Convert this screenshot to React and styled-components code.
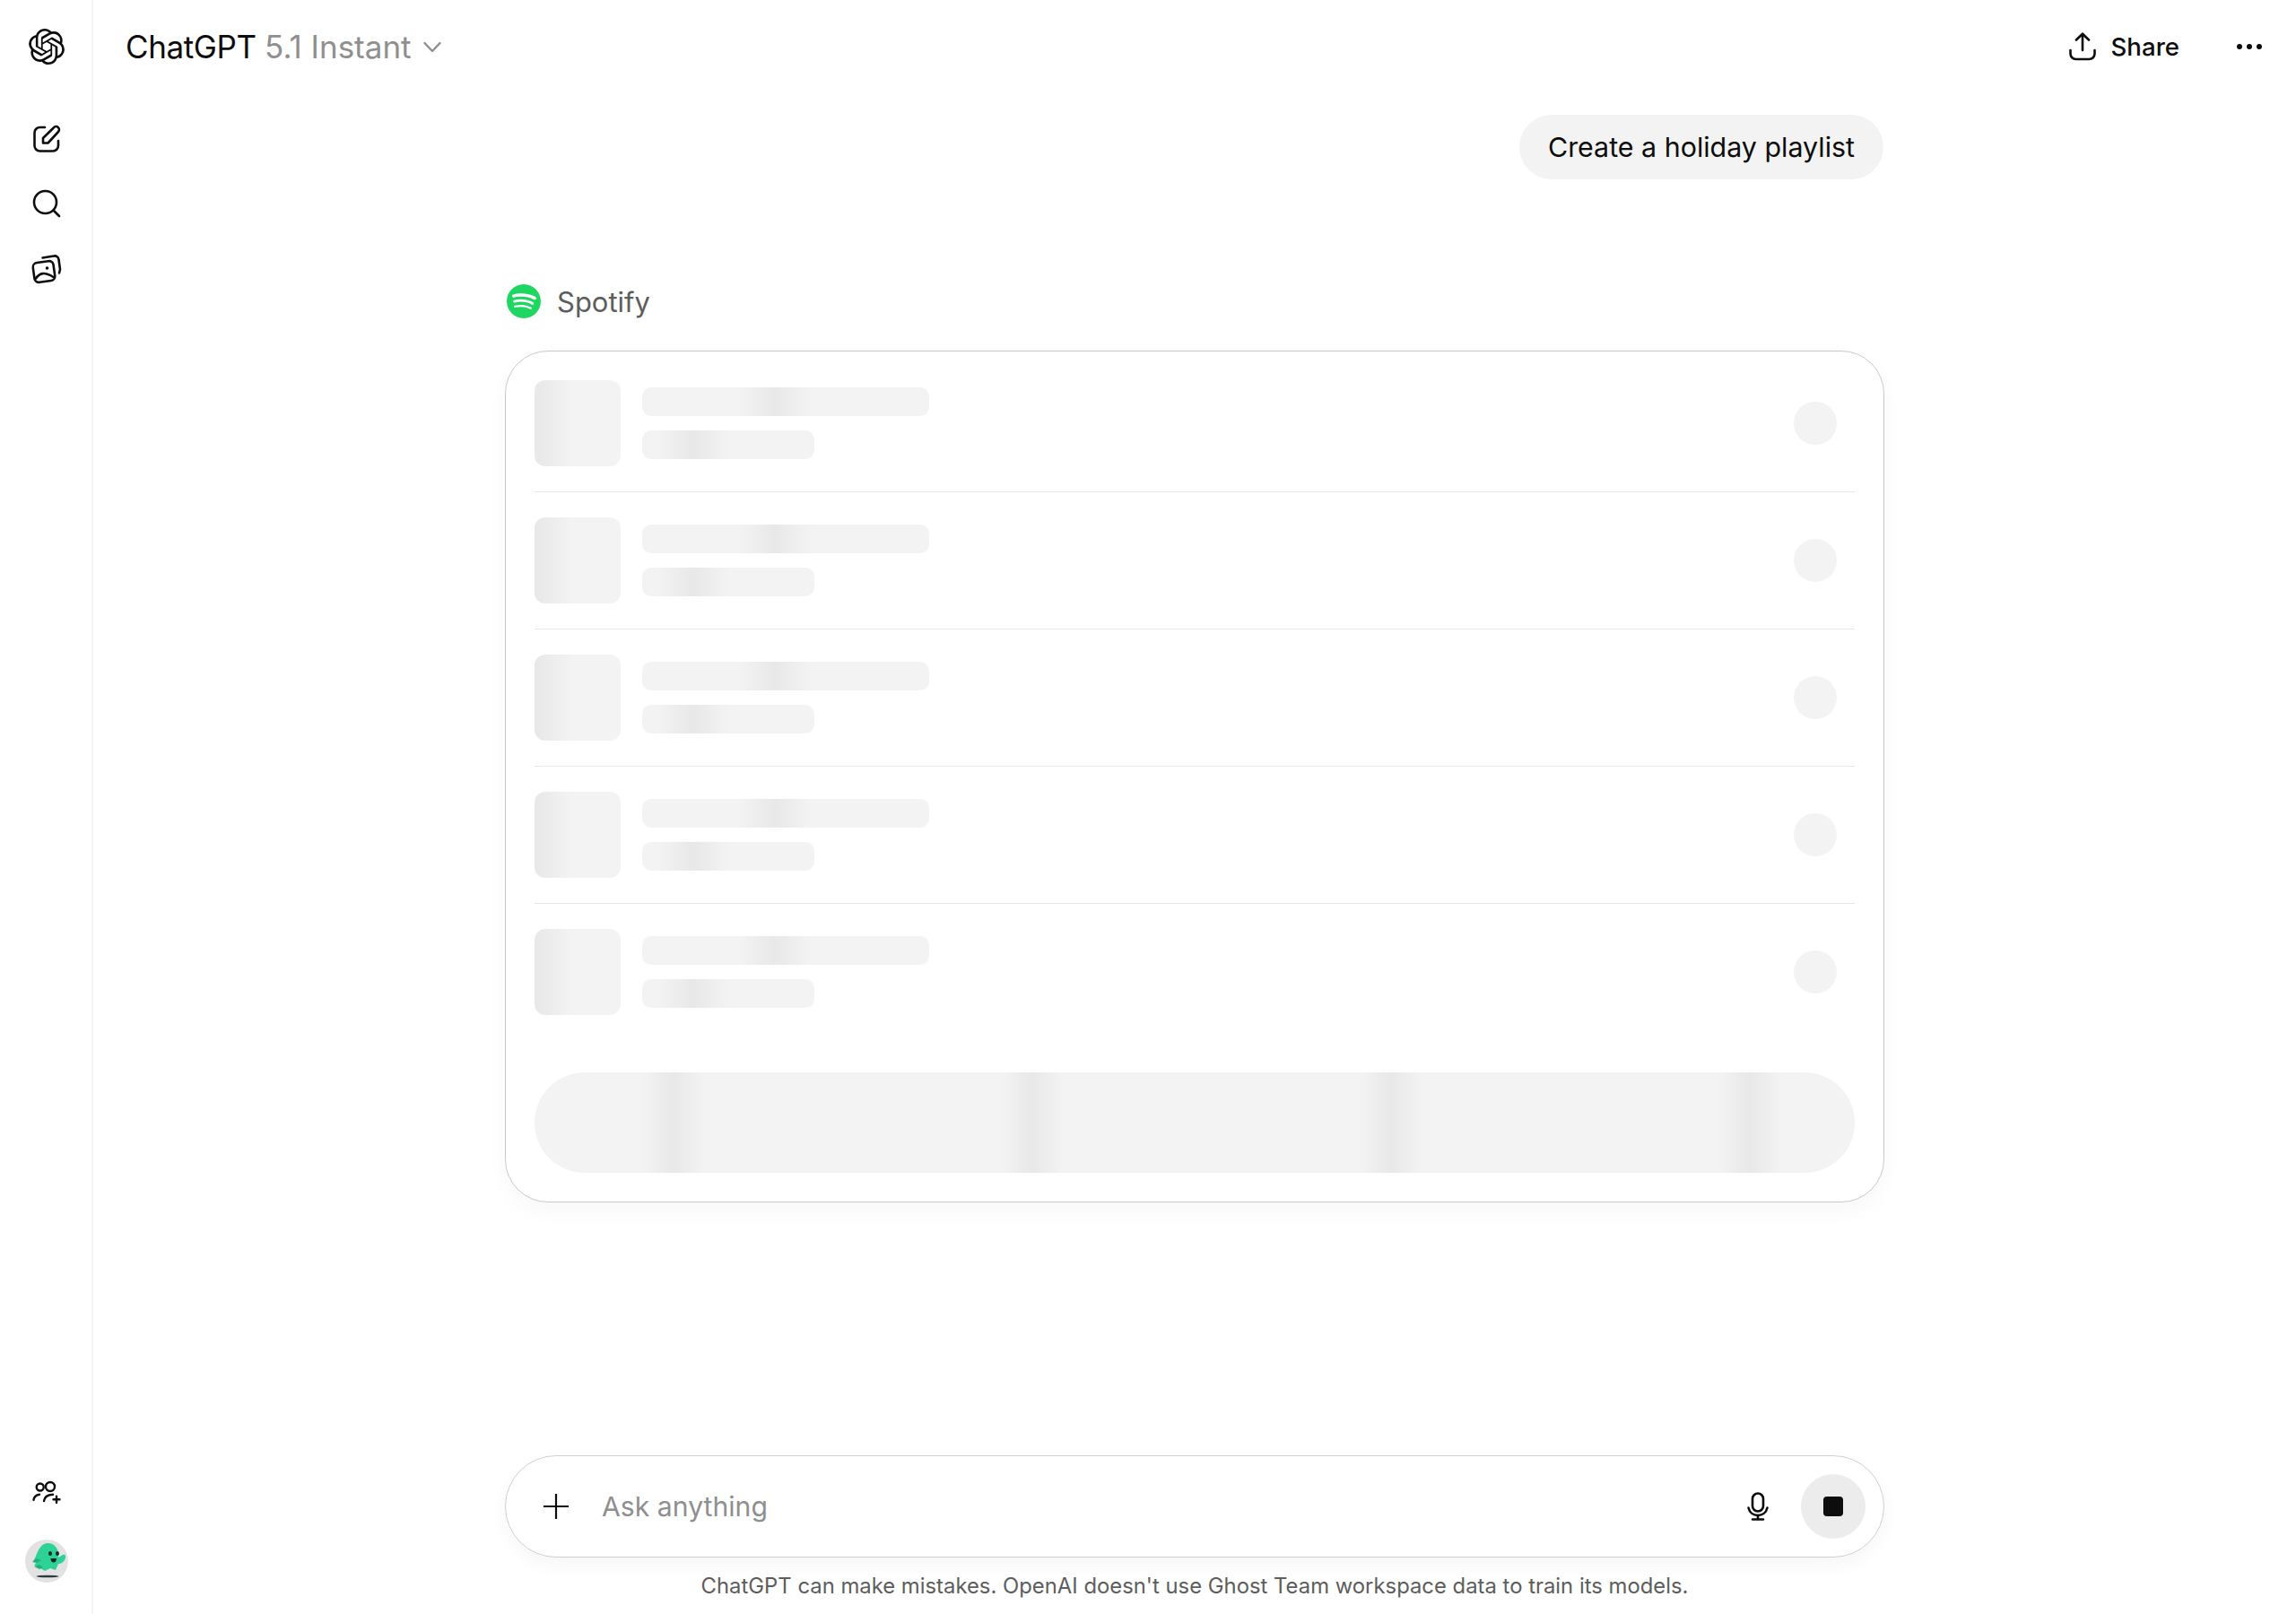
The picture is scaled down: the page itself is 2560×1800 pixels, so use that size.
import React from 'react';
import styled, { createGlobalStyle, css } from 'styled-components';
import { SiOpenai, SiSpotify } from 'react-icons/si';

const INK = '#0d0d0d';
const BASE = '#f3f3f3';
const PEAK = '#e8e8e8';

const GlobalStyle = createGlobalStyle`
  html, body {
    margin: 0;
    padding: 0;
    background: #fff;
    color: ${INK};
    font-family: Inter, "Liberation Sans", sans-serif;
  }
  * { box-sizing: border-box; }
`;

// the loading shimmer caught mid-sweep: a soft band at $peak px from the left
const shimmer = css`
  background: linear-gradient(
    90deg,
    ${BASE} ${p => p.$peak - 40}px,
    ${PEAK} ${p => p.$peak}px,
    ${BASE} ${p => p.$peak + 40}px
  );
`;

const Page = styled.div`
  display: flex;
  width: 2560px;
  height: 1800px;
  overflow: hidden;
`;

const Sidebar = styled.aside`
  display: flex;
  flex-direction: column;
  align-items: center;
  flex: 0 0 104px;
  height: 100%;
  padding: 32px 0 35px 2px;
  border-right: 2px solid #f3f3f3;
`;

const Logo = styled.div`
  display: flex;
  height: 40px;
  margin-bottom: 47px;
`;

const RailButton = styled.div`
  display: flex;
  align-items: center;
  justify-content: center;
  width: 72px;
  height: 72px;
`;

const RailFoot = styled.div`
  display: flex;
  flex-direction: column;
  align-items: center;
  gap: 39px;
  margin-top: auto;
`;

const Main = styled.main`
  display: flex;
  flex-direction: column;
  align-items: center;
  flex: 1;
  min-width: 0;
`;

const Header = styled.header`
  display: flex;
  align-items: center;
  justify-content: space-between;
  flex: 0 0 104px;
  align-self: stretch;
  padding: 0 38px 0 36px;
`;

const ModelPicker = styled.div`
  display: flex;
  align-items: center;
  gap: 13px;
  font-size: 35px;
  letter-spacing: -0.4px;
`;

const ModelName = styled.span`
  color: #8f8f8f;
  letter-spacing: 0;
`;

const HeaderActions = styled.div`
  display: flex;
  align-items: center;
  gap: 64px;
`;

const ShareButton = styled.div`
  display: flex;
  align-items: center;
  gap: 17px;
  font-size: 27.6px;
  font-weight: 500;
`;

const Dots = styled.div`
  display: flex;
  gap: 5px;
`;

const Dot = styled.span`
  width: 6px;
  height: 6px;
  border-radius: 50%;
  background: ${INK};
`;

const Thread = styled.div`
  display: flex;
  flex-direction: column;
  width: 1538px;
  padding-top: 24px;
`;

const UserBubble = styled.div`
  align-self: flex-end;
  height: 72px;
  margin-right: 1px;
  padding: 0 32px;
  border-radius: 36px;
  background: #f3f3f3;
  font-size: 30.4px;
  line-height: 72px;
`;

const AppLabel = styled.div`
  display: flex;
  align-items: center;
  gap: 18px;
  height: 38px;
  margin: 117px 0 36px;
  padding-left: 2px;
  color: #5d5d5d;
  font-size: 31px;
`;

const Card = styled.section`
  display: flex;
  flex-direction: column;
  height: 950px;
  padding: 32px;
  border: 1px solid #c8c8c8;
  border-radius: 48px;
  box-shadow: 0 10px 24px rgba(0, 0, 0, 0.03);
`;

const Row = styled.div`
  display: flex;
  align-items: center;
  padding: 28px 0;
  border-bottom: 1px solid #e6e6e6;

  &:first-child { padding-top: 0; }
  &:last-child { padding-bottom: 0; border-bottom: 0; }
`;

const Thumb = styled.div`
  ${shimmer}
  flex: 0 0 96px;
  height: 96px;
  border-radius: 12px;
`;

const RowText = styled.div`
  display: flex;
  flex-direction: column;
  gap: 16px;
  flex: 1;
  margin-left: 24px;
`;

const Bar = styled.div`
  ${shimmer}
  width: ${p => p.$width}px;
  height: 32px;
  border-radius: 10px;
`;

const RoundPlaceholder = styled.div`
  flex: 0 0 48px;
  height: 48px;
  margin-right: 20px;
  border-radius: 50%;
  background: ${BASE};
`;

const BigButton = styled.div`
  height: 112px;
  margin-top: 64px;
  border-radius: 56px;
  background: repeating-linear-gradient(
    90deg,
    ${BASE} 0,
    ${BASE} 120px,
    ${PEAK} 155px,
    ${BASE} 190px,
    ${BASE} 400px
  );
`;

const Composer = styled.div`
  display: flex;
  align-items: center;
  flex: 0 0 114px;
  width: 1538px;
  margin-top: auto;
  padding: 0 20px 0 42px;
  border: 1px solid #cfcfcf;
  border-radius: 57px;
  box-shadow: 0 8px 20px rgba(0, 0, 0, 0.04);
`;

const Placeholder = styled.span`
  flex: 1;
  margin-left: 37px;
  color: #8f8f8f;
  font-size: 30.2px;
`;

const StopButton = styled.div`
  display: flex;
  align-items: center;
  justify-content: center;
  width: 72px;
  height: 72px;
  margin-left: 36px;
  border-radius: 50%;
  background: #ececec;
`;

const StopSquare = styled.span`
  width: 22px;
  height: 22px;
  border-radius: 4px;
  background: ${INK};
`;

const Disclaimer = styled.div`
  display: flex;
  align-items: center;
  justify-content: center;
  flex: 0 0 63px;
  color: #5d5d5d;
  font-size: 23.85px;
`;

const Line = props => (
  <svg fill="none" stroke={INK} strokeWidth="2.6" strokeLinecap="round" strokeLinejoin="round" {...props} />
);

const EditIcon = () => (
  <Line width="32" height="32" viewBox="0 0 32 32">
    <path d="M14 3H8.500A6 6 0 0 0 2.500 9v14.500a6 6 0 0 0 6 6H23a6 6 0 0 0 6-6V18" />
    <path d="M12 20.500v-5.500L24 3.200a3.400 3.400 0 0 1 5 4.800L17.500 20.500z" />
  </Line>
);

const SearchIcon = () => (
  <Line width="32" height="32" viewBox="0 0 32 32">
    <circle cx="14.500" cy="14.500" r="12.500" />
    <path d="M24 24l6 6" />
  </Line>
);

const LibraryIcon = () => (
  <Line width="36" height="36" viewBox="0 0 36 36">
    <rect x="3.500" y="11" width="23" height="22" rx="5" transform="rotate(-8 15 22)" />
    <path d="M13.500 6.500L26 4.500a4.500 4.500 0 0 1 5.500 4l1.500 11-1 4" />
    <path d="M5.500 30c5-7 10-8 20-2" />
    <circle cx="18.500" cy="18" r="1.800" fill={INK} stroke="none" />
  </Line>
);

const TeamIcon = () => (
  <Line width="34" height="28" viewBox="0 0 34 28" strokeWidth="2.400">
    <circle cx="9.700" cy="8.500" r="4" />
    <circle cx="21" cy="8" r="5" />
    <path d="M2.500 22.700c.5-3.200 2.800-5.500 6.500-6" />
    <path d="M14 24c.5-4.300 4-7 10-7.300" />
    <path d="M28 18.800v7M24.500 22.300h7" />
  </Line>
);

const GhostAvatar = () => (
  <svg width="48" height="48" viewBox="0 0 48 48">
    <circle cx="24" cy="24" r="24" fill="#e2e2e2" />
    <ellipse cx="25" cy="41" rx="12.500" ry="1.300" fill="#2d3a40" />
    <path
      d="M25 4c8 0 12 6 12 13v3l5-3c3-1 4 2 2.500 5-1.500 3-4.500 5-7.500 5l-3 7-6-2-6 3-5-3 1-2-8-1 3-4-4-1c4-4 5-19 16-20z"
      fill="#2dd296"
    />
    <path d="M13 26l-5-1 4-4 6 2zM16 33l-6-3 6-2 4 3z" fill="#22b07e" />
    <ellipse cx="28" cy="15.500" rx="2" ry="2.600" fill="#12282a" />
    <ellipse cx="36" cy="15.500" rx="2" ry="2.600" fill="#12282a" />
    <path d="M28.500 21h6.500c0 3-1.500 4.500-3.200 4.500-1.800 0-3.300-1.500-3.300-4.500z" fill="#12282a" />
  </svg>
);

const Chevron = () => (
  <svg width="20" height="13" viewBox="0 0 20 13" fill="none" stroke="#8f8f8f" strokeWidth="2.400" strokeLinecap="round" strokeLinejoin="round">
    <path d="M1.500 2l8.500 9 8.500-9" />
  </svg>
);

const ShareIcon = () => (
  <Line width="30" height="32" viewBox="0 0 30 32">
    <path d="M15 20V2M8 8.500L15 1.700l7 6.800" />
    <path d="M1.500 20v4a6 6 0 0 0 6 6h15a6 6 0 0 0 6-6v-4" />
  </Line>
);

const PlusIcon = () => (
  <Line width="28" height="28" viewBox="0 0 28 28" strokeWidth="2.200">
    <path d="M14 0v28M0 14h28" />
  </Line>
);

const MicIcon = () => (
  <Line width="24" height="32" viewBox="0 0 24 32">
    <rect x="6" y="1.500" width="12" height="20" rx="6" />
    <path d="M1.500 17.500c1.200 5.500 5.500 8.500 10.500 8.500s9.300-3 10.500-8.500" />
    <path d="M12 26v4.500M6 30.500h12" />
  </Line>
);

const ROWS = [0, 1, 2, 3, 4];

const App = () => (
  <Page>
    <GlobalStyle />
    <Sidebar>
      <Logo>
        <SiOpenai size={40} color={INK} />
      </Logo>
      <RailButton><EditIcon /></RailButton>
      <RailButton><SearchIcon /></RailButton>
      <RailButton><LibraryIcon /></RailButton>
      <RailFoot>
        <TeamIcon />
        <GhostAvatar />
      </RailFoot>
    </Sidebar>

    <Main>
      <Header>
        <ModelPicker>
          <span>ChatGPT <ModelName>5.1 Instant</ModelName></span>
          <Chevron />
        </ModelPicker>
        <HeaderActions>
          <ShareButton>
            <ShareIcon />
            Share
          </ShareButton>
          <Dots>
            <Dot />
            <Dot />
            <Dot />
          </Dots>
        </HeaderActions>
      </Header>

      <Thread>
        <UserBubble>Create a holiday playlist</UserBubble>
        <AppLabel>
          <SiSpotify size={38} color="#1ed760" />
          Spotify
        </AppLabel>
        <Card>
          <div>
            {ROWS.map(i => (
              <Row key={i}>
                <Thumb $peak={2} />
                <RowText>
                  <Bar $width={320} $peak={148} />
                  <Bar $width={192} $peak={57} />
                </RowText>
                <RoundPlaceholder />
              </Row>
            ))}
          </div>
          <BigButton />
        </Card>
      </Thread>

      <Composer>
        <PlusIcon />
        <Placeholder>Ask anything</Placeholder>
        <MicIcon />
        <StopButton>
          <StopSquare />
        </StopButton>
      </Composer>
      <Disclaimer>ChatGPT can make mistakes. OpenAI doesn't use Ghost Team workspace data to train its models.</Disclaimer>
    </Main>
  </Page>
);

export default App;
